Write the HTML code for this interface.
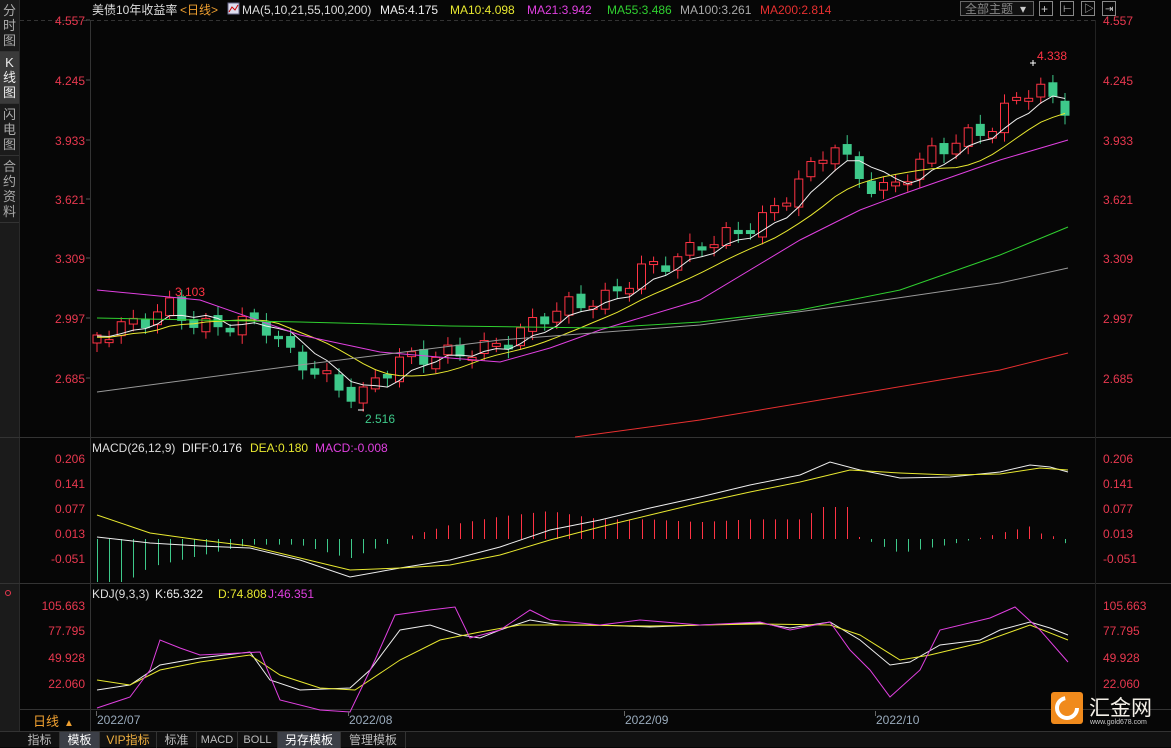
<!DOCTYPE html>
<html><head><meta charset="utf-8"><style>
*{margin:0;padding:0;box-sizing:border-box}
body{width:1171px;height:747px;background:#060606;overflow:hidden;font-family:"Liberation Sans","Noto Sans CJK SC",sans-serif;position:relative}
.side{position:absolute;left:0;top:0;width:20px;height:731px;background:#1b1b1b;border-right:1px solid #2a2a2a}
.side div{color:#aaa;font-size:13px;line-height:15px;text-align:center;padding:3px 0;border-bottom:1px solid #333}
.side .act{background:#3a3a3a;color:#eee}
svg{position:absolute;left:0;top:0}
.tabs{position:absolute;left:0;top:731px;width:1171px;height:16px;background:#111;border-top:1px solid #333;font-size:12px;color:#bbb}
.tabs span{position:absolute;top:0;height:16px;line-height:16px;text-align:center;border-right:1px solid #333}
</style></head><body>
<div class="side"><div>分<br>时<br>图</div><div class="act">K<br>线<br>图</div><div>闪<br>电<br>图</div><div>合<br>约<br>资<br>料</div></div>
<svg id="s" width="1171" height="731" xmlns="http://www.w3.org/2000/svg" font-family="Liberation Sans, Noto Sans CJK SC, sans-serif"></svg>
<div class="tabs">
<span style="left:20px;width:40px">指标</span>
<span style="left:60px;width:40px;background:#3c3f47;color:#fff">模板</span>
<span style="left:100px;width:57px;color:#f0b040">VIP指标</span>
<span style="left:157px;width:40px">标准</span>
<span style="left:197px;width:41px;font-size:11px">MACD</span>
<span style="left:238px;width:40px;font-size:11px">BOLL</span>
<span style="left:278px;width:63px;background:#3c3f47;color:#fff">另存模板</span>
<span style="left:341px;width:65px">管理模板</span>
</div>
<script>
(function(){
var s=document.getElementById('s'),h='';
function L(x1,y1,x2,y2,c,w,d){h+='<line x1="'+x1+'" y1="'+y1+'" x2="'+x2+'" y2="'+y2+'" stroke="'+c+'" stroke-width="'+(w||1)+'"'+(d?' stroke-dasharray="'+d+'"':'')+'/>';}
function T(x,y,t,c,sz,a){h+='<text x="'+x+'" y="'+y+'" fill="'+c+'" font-size="'+(sz||12)+'"'+(a?' text-anchor="'+a+'"':'')+'>'+t+'</text>';}
function P(pts,c){h+='<polyline fill="none" stroke="'+c+'" stroke-width="1" points="'+pts.map(function(p){return p[0]+','+p[1]}).join(' ')+'"/>';}
function interp(k,x){for(var i=0;i<k.length-1;i++){if(x<=k[i+1][0]){var t=(x-k[i][0])/(k[i+1][0]-k[i][0]);return k[i][1]+t*(k[i+1][1]-k[i][1]);}}return k[k.length-1][1];}
L(0,437.5,1171,437.5,'#333');L(0,583.5,1171,583.5,'#333');L(20,709.5,1171,709.5,'#333');
L(90.5,20,90.5,731,'#333');L(20,20.5,1095,20.5,'#333',1,'4,3');
L(1095.5,20,1095.5,709,'#222');
var pl=[['4.557',24],['4.245',84],['3.933',144],['3.621',203],['3.309',262],['2.997',322],['2.685',382]];
pl.forEach(function(p){T(85,p[1]+1,p[0],'#e8384f',12,'end');T(1103,p[1]+1,p[0],'#e8384f',12);L(86,p[1]-4,90,p[1]-4,'#555');});
[['0.206',463],['0.141',488],['0.077',513],['0.013',538],['-0.051',563]].forEach(function(p){T(85,p[1],p[0],'#e8384f',12,'end');T(1103,p[1],p[0],'#e8384f',12);});
[['105.663',610],['77.795',635],['49.928',662],['22.060',688]].forEach(function(p){T(85,p[1],p[0],'#e8384f',12,'end');T(1103,p[1],p[0],'#e8384f',12);});
T(92,14,'美债10年收益率','#ddd',12);T(180,14,'&lt;日线&gt;','#f0a030',12);
h+='<rect x="228" y="3" width="11" height="11" fill="#dde" stroke="#668"/><polyline points="229,12 232,7 235,10 238,5" stroke="#c00" fill="none"/>';
T(242,14,'MA(5,10,21,55,100,200)','#ddd');T(380,14,'MA5:4.175','#eee');T(450,14,'MA10:4.098','#e8e830');T(527,14,'MA21:3.942','#e040e0');T(607,14,'MA55:3.486','#30d030');T(680,14,'MA100:3.261','#aaa');T(760,14,'MA200:2.814','#e83030');
h+='<rect x="960.5" y="1.5" width="73" height="14" fill="#111" stroke="#666"/>';T(965,13,'全部主题','#888',12);T(1020,13,'▾','#ccc',12);
[1039,1060,1081,1102].forEach(function(x){h+='<rect x="'+(x+.5)+'" y="1.5" width="13" height="14" fill="none" stroke="#888"/>';});
T(1041,13,'+','#ccc',12);T(1063,12,'⊢','#ccc',10);T(1084,12,'▷','#ccc',10);T(1105,12,'⇥','#ccc',10);
var k=[[97,335],[150,318],[168,305],[200,328],[250,322],[265,325],[290,355],[320,375],[345,392],[360,398],[380,375],[400,360],[440,355],[480,350],[510,340],[540,318],[570,305],[610,298],[640,270],[670,262],[700,245],[740,232],[770,215],[790,190],[815,165],[832,140],[850,168],[875,190],[890,190],[905,175],[935,150],[960,140],[990,128],[1010,105],[1025,90],[1040,88],[1055,105],[1068,108]];
var N=81,xs=[],cl=[];
for(var i=0;i<N;i++){var x=97+i*12.1;xs.push(x);cl.push(interp(k,x)+9*Math.sin(i*1.9));}
for(var i=0;i<N;i++){var c=cl[i],o=(i?cl[i-1]:c+8)+4*Math.sin(i*2.3);if(Math.abs(o-c)<3)o=c+3;
var bt=Math.min(o,c),bb=Math.max(o,c),hi=bt-3-6*Math.abs(Math.sin(i*1.7)),lo=bb+3+6*Math.abs(Math.cos(i*1.3));
var up=c<o,col=up?'#ff3344':'#3ec98a',x=xs[i];
L(x,hi,x,lo,col);
if(up)h+='<rect x="'+(x-4)+'" y="'+bt+'" width="8" height="'+(bb-bt)+'" fill="#060606" stroke="'+col+'"/>';
else h+='<rect x="'+(x-4.5)+'" y="'+bt+'" width="9" height="'+(bb-bt)+'" fill="'+col+'"/>';}
function ma(n){var r=[];for(var i=0;i<N;i++){var sm=0;for(var j=i-n+1;j<=i;j++)sm+=cl[Math.max(j,0)]+(j<0?(-j*0.5):0);r.push([xs[i],(sm/n).toFixed(1)]);}return r;}
P(ma(5),'#eee');P(ma(10),'#e8e830');
P([[97,290],[200,300],[300,335],[380,352],[450,358],[500,362],[550,348],[600,330],[700,300],[800,240],[860,210],[900,195],[1000,160],[1068,140]],'#e040e0');
P([[97,318],[300,322],[450,326],[600,328],[700,322],[800,310],[900,290],[1000,255],[1068,227]],'#30d030');
P([[97,392],[300,365],[500,340],[700,325],[850,305],[1000,283],[1068,268]],'#999');
P([[575,437],[700,420],[850,395],[1000,370],[1068,353]],'#e83030');
T(175,296,'3.103','#ff3344',12);T(365,423,'2.516','#3ec98a',12);T(1037,60,'4.338','#ff3344',12);
L(358,410,364,410,'#fff');L(1030,63,1036,63,'#fff');L(1033,60,1033,66,'#fff');
T(92,452,'MACD(26,12,9)','#ddd');T(182,452,'DIFF:0.176','#eee');T(250,452,'DEA:0.180','#e8e830');T(315,452,'MACD:-0.008','#e040e0');
var dif=[[97,537],[150,543],[200,546],[250,548],[300,560],[350,577],[400,568],[450,560],[500,547],[550,530],[600,520],[650,508],[700,497],[750,485],[800,475],[830,462],[860,470],[900,478],[950,477],[1000,472],[1030,465],[1050,467],[1068,472]];
var dea=[[97,515],[150,533],[200,540],[250,546],[300,558],[350,570],[400,568],[450,565],[500,555],[550,540],[600,527],[650,515],[700,503],[750,492],[800,482],[850,470],[900,473],[950,475],[1000,474],[1040,468],[1068,470]];
for(var i=0;i<N;i++){var x=Math.round(xs[i])+.5,d=(interp(dea,x)-interp(dif,x))*2.8;if(x>820&&x<850)d+=22;d=Math.max(-43,Math.min(32,d));
if(Math.abs(d)>0.5)L(x,539,x,539-d,d>0?'#ff3344':'#3ec98a');}
P(dif,'#eee');P(dea,'#e8e830');
h+='<circle cx="8" cy="593" r="2.5" fill="none" stroke="#e8384f"/>';
T(92,598,'KDJ(9,3,3)','#ddd');T(155,598,'K:65.322','#eee');T(218,598,'D:74.808','#e8e830');T(268,598,'J:46.351','#e040e0');
P([[97,690],[130,685],[160,665],[200,658],[250,652],[270,680],[300,690],[350,688],[370,670],[400,630],[430,625],[460,635],[480,638],[500,630],[530,620],[560,625],[600,625],[650,627],[700,625],[760,623],[790,628],[830,622],[860,640],[890,665],[910,662],[940,645],[980,640],[1000,630],[1030,622],[1050,628],[1068,635]],'#eee');
P([[97,680],[130,685],[160,670],[200,662],[250,655],[280,675],[320,688],[355,690],[400,660],[440,640],[480,632],[520,625],[560,625],[650,626],[760,624],[830,625],[860,635],[900,660],[930,655],[980,643],[1030,625],[1068,640]],'#e8e830');
P([[97,708],[130,697],[150,670],[160,640],[180,648],[200,655],[260,652],[280,700],[320,710],[350,712],[375,660],[395,615],[430,610],[455,607],[470,638],[500,630],[530,610],[550,620],[600,625],[640,620],[700,625],[760,622],[790,630],[830,622],[850,650],[870,670],[890,697],[920,670],[940,630],[990,618],[1015,607],[1040,630],[1068,662]],'#e040e0');
[[97,'2022/07'],[349,'2022/08'],[625,'2022/09'],[876,'2022/10']].forEach(function(d){L(d[0]-0.5,711,d[0]-0.5,716,'#666');T(d[0],724,d[1],'#9ab',12);});
T(33,726,'日线','#f0a030',13);T(64,726,'▲','#f0a030',10);
h+='<rect x="1051" y="692" width="32" height="32" rx="3" fill="#f08a1c"/><circle cx="1067" cy="708" r="10" fill="none" stroke="#fff" stroke-width="4" stroke-dasharray="45,20"/><circle cx="1070" cy="706" r="5" fill="#f08a1c"/>';
T(1089,715,'汇金网','#f4f0e8',21);T(1090,724,'www.gold678.com','#ccc',7);
s.innerHTML=h;
})();
</script>
</body></html>
